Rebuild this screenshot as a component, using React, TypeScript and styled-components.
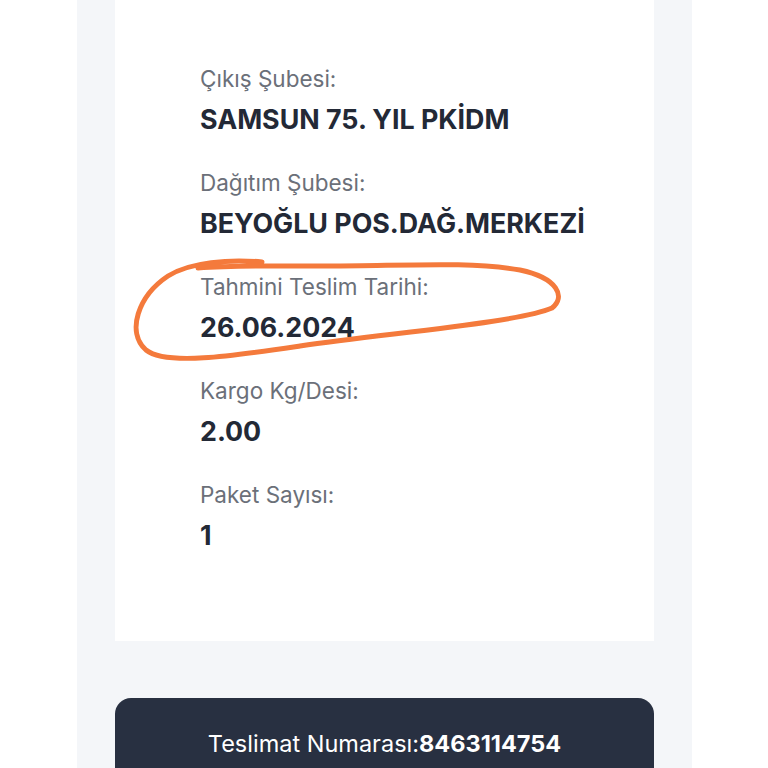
import React from "react";
import styled, { createGlobalStyle } from "styled-components";

const GlobalStyle = createGlobalStyle`
  html, body {
    margin: 0;
    padding: 0;
    background: #ffffff;
    font-family: "Inter", "Noto Sans", sans-serif;
    overflow: hidden;
  }
`;

const Page = styled.div`
  width: 768px;
  height: 768px;
  overflow: hidden;
  background: #ffffff;
`;

const Panel = styled.div`
  width: 615px;
  height: 768px;
  margin-left: 77px;
  background: #f4f6f9;
  padding: 0 38px;
  box-sizing: border-box;
  display: flex;
  flex-direction: column;
  gap: 57px;
`;

const Card = styled.div`
  position: relative;
  flex-shrink: 0;
  background: #ffffff;
  height: 641px;
  box-sizing: border-box;
  padding: 65px 0 0 85px;
  display: flex;
  flex-direction: column;
`;

const Row = styled.div`
  height: 104px;
  display: flex;
  flex-direction: column;
`;

const Label = styled.div`
  font-size: 22.5px;
  line-height: 28px;
  color: #6b7079;
  font-weight: 400;
`;

const Value = styled.div`
  margin-top: 10px;
  font-size: 26.8px;
  line-height: 32px;
  font-weight: 700;
  color: #232936;
`;

const Mark = styled.svg`
  position: absolute;
  left: -115px;
  top: 0;
  pointer-events: none;
`;

const NumberBar = styled.div`
  flex-shrink: 0;
  height: 120px;
  background: #283041;
  border-radius: 16px 16px 0 0;
  display: flex;
  justify-content: center;
  padding-top: 31px;
  box-sizing: border-box;
  color: #ffffff;
  font-size: 23.5px;
  line-height: 30px;
`;

const Strong = styled.span`
  font-weight: 700;
`;

const rows = [
  { label: "Çıkış Şubesi:", value: "SAMSUN 75. YIL PKİDM" },
  { label: "Dağıtım Şubesi:", value: "BEYOĞLU POS.DAĞ.MERKEZİ" },
  { label: "Tahmini Teslim Tarihi:", value: "26.06.2024" },
  { label: "Kargo Kg/Desi:", value: "2.00" },
  { label: "Paket Sayısı:", value: "1" },
];

export default function App() {
  return (
    <Page>
      <GlobalStyle />
      <Panel>
        <Card>
          {rows.map((r) => (
            <Row key={r.label}>
              <Label>{r.label}</Label>
              <Value>{r.value}</Value>
            </Row>
          ))}
          <Mark width="768" height="641" viewBox="0 0 768 641">
            <path
              d="M 262 262 C 230 259, 190 262, 168 276 C 138 296, 126 332, 146 350 C 166 366, 232 356, 300 346 C 400 332, 520 322, 552 308 C 566 297, 558 278, 520 270 C 470 261, 400 266, 330 266 C 290 266, 240 265, 198 268"
              fill="none"
              stroke="#f47a3c"
              strokeWidth="5"
              strokeLinecap="round"
              strokeLinejoin="round"
            />
          </Mark>
        </Card>
        <NumberBar>
          Teslimat Numarası:<Strong>8463114754</Strong>
        </NumberBar>
      </Panel>
    </Page>
  );
}
